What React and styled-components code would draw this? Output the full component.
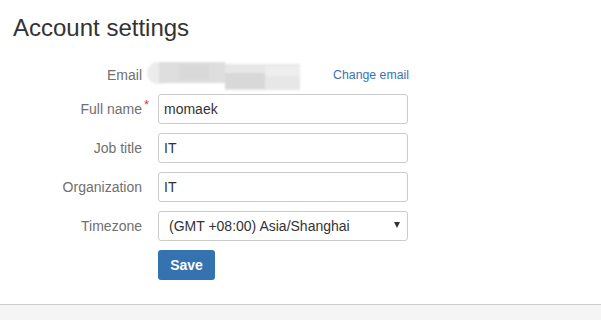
import React from "react";
import styled, { createGlobalStyle } from "styled-components";

const Global = createGlobalStyle`
  html, body { margin: 0; padding: 0; background: #fff; }
  body { font-family: "Liberation Sans", Arial, sans-serif; color: #333; }
`;

const Page = styled.div`
  display: flex;
  flex-direction: column;
  height: 320px;
  overflow: hidden;
`;

const Main = styled.main`
  height: 304px;
  padding: 0 13px;
  box-sizing: border-box;
`;

const Title = styled.h1`
  margin: 13px 0 0;
  font-size: 24px;
  line-height: 30px;
  font-weight: normal;
  color: #333;
`;

const Form = styled.form`
  display: flex;
  flex-direction: column;
  margin-top: 17px;
`;

const Row = styled.div`
  display: flex;
  align-items: center;
  height: 30px;
  margin-bottom: ${(p) => p.$after}px;
`;

const Label = styled.label`
  position: relative;
  width: 129px;
  margin-right: 16px;
  text-align: right;
  font-size: 14px;
  line-height: 30px;
  color: #707070;
`;

const Required = styled.span`
  position: absolute;
  right: -7px;
  top: -4px;
  color: #d04437;
  font-size: 13px;
`;

const Field = styled.div`
  position: relative;
  width: 250px;
  height: 30px;
  display: flex;
  align-items: center;
`;

const Input = styled.div`
  box-sizing: border-box;
  width: 250px;
  height: 30px;
  border: 1px solid #ccc;
  border-radius: 3px;
  padding: 0 5px;
  font-size: 14px;
  line-height: 28px;
  color: #333;
  background: #fff;
`;

const Select = styled(Input)`
  padding: 0 10px;
  display: flex;
  justify-content: space-between;
  align-items: center;
`;

const Caret = styled.span`
  width: 0;
  height: 0;
  border-left: 3px solid transparent;
  border-right: 3px solid transparent;
  border-top: 6px solid #333;
  margin-right: -3px;
  margin-top: -2px;
`;

const Smudge = styled.div`
  position: absolute;
  left: -11px;
  top: 2px;
  width: 155px;
  height: 30px;
  filter: blur(1px);
`;

const Blob = styled.div`
  position: absolute;
  left: ${(p) => p.$x}px;
  top: ${(p) => p.$y}px;
  width: ${(p) => p.$w}px;
  height: ${(p) => p.$h}px;
  background: ${(p) => p.$c};
  border-radius: ${(p) => p.$r || 0}px;
`;

const Link = styled.a`
  margin-left: auto;
  margin-right: -1px;
  font-size: 12.3px;
  color: #3b73af;
  text-decoration: none;
`;

const Button = styled.button`
  box-sizing: border-box;
  width: 57px;
  height: 30px;
  border: none;
  border-radius: 3px;
  background: #3572b0;
  color: #fff;
  font-family: "Liberation Sans", Arial, sans-serif;
  font-size: 14px;
  font-weight: bold;
  padding: 0;
`;

const Footer = styled.footer`
  flex: 1;
  border-top: 1px solid #ccc;
  background: #f5f5f5;
`;

export default function App() {
  return (
    <>
      <Global />
      <Page>
        <Main>
          <Title>Account settings</Title>
          <Form>
            <Row $after={4}>
              <Label>Email</Label>
              <Field>
                <Smudge>
                  <Blob $x={0} $y={0} $w={24} $h={22} $r={11} $c="#ececec" />
                  <Blob $x={12} $y={0} $w={66} $h={21} $c="#dedede" />
                  <Blob $x={32} $y={2} $w={30} $h={16} $c="#d9d9d9" />
                  <Blob $x={78} $y={2} $w={75} $h={26} $c="#e7e7e7" />
                  <Blob $x={78} $y={11} $w={40} $h={16} $c="#d8d8d8" />
                  <Blob $x={118} $y={4} $w={35} $h={10} $c="#eeeeee" />
                </Smudge>
                <Link href="#">Change email</Link>
              </Field>
            </Row>
            <Row $after={9}>
              <Label>
                Full name<Required>*</Required>
              </Label>
              <Field>
                <Input>momaek</Input>
              </Field>
            </Row>
            <Row $after={9}>
              <Label>Job title</Label>
              <Field>
                <Input>IT</Input>
              </Field>
            </Row>
            <Row $after={9}>
              <Label>Organization</Label>
              <Field>
                <Input>IT</Input>
              </Field>
            </Row>
            <Row $after={9}>
              <Label>Timezone</Label>
              <Field>
                <Select>
                  <span>(GMT +08:00) Asia/Shanghai</span>
                  <Caret />
                </Select>
              </Field>
            </Row>
            <Row $after={0}>
              <Label />
              <Button type="button">Save</Button>
            </Row>
          </Form>
        </Main>
        <Footer />
      </Page>
    </>
  );
}
